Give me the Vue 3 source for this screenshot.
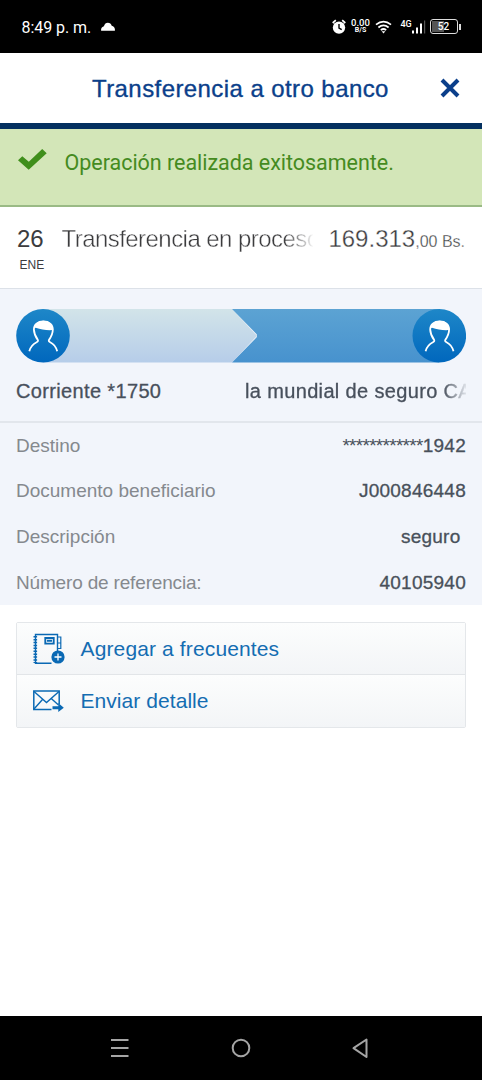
<script setup>
const details = [
  { label: 'Destino', mask: '************', value: '1942' },
  { label: 'Documento beneficiario', value: 'J000846448' },
  { label: 'Descripción', value: 'seguro', padded: true },
  { label: 'Número de referencia:', value: '40105940', tight: true },
]
</script>

<template>
  <div class="screen">
    <div class="status">
      <span class="clock">8:49 p. m.</span>
      <svg class="cloud" width="14" height="9" viewBox="0 0 14 9"><path d="M.1 8.700V7.300C.5 5.400 1.600 4.600 2.900 4.200 3.600 1.800 5 .7 6.800.7c2 0 3.400 1.200 3.900 3.100 1.900.3 3 1.700 3.200 3.500v1.400z" fill="#fff"/></svg>
      <svg class="alarm" width="14" height="16" viewBox="0 0 14 16">
        <circle cx="7" cy="8.6" r="6.2" fill="#fff"/>
        <path d="M.7 4 3.8 1.2M13.3 4 10.2 1.2" stroke="#fff" stroke-width="1.7"/>
        <path d="M7 5v4l2.700 1.600" fill="none" stroke="#000" stroke-width="1.400"/>
      </svg>
      <div class="speed"><span>0.00</span><small>B/S</small></div>
      <svg class="wifi" width="17" height="14" viewBox="0 0 17 14">
        <path d="M1 4.700q7.500-6.200 15 0M3.400 7.500q5.100-4.300 10.200 0M5.800 10.100q2.700-2.200 5.400 0" fill="none" stroke="#fff" stroke-width="1.700"/>
        <path d="m6.600 11.200h3.800L8.500 13.400z" fill="#fff"/>
      </svg>
      <span class="net">4G</span>
      <svg class="bars" width="14" height="15" viewBox="0 0 14 15">
        <path d="M0 11.500h2v3H0zM4 8.500h2v6H4zM8 4.500h2v10H8z" fill="#fff"/>
        <path d="M12 1.500h1.200v13H12z" fill="#555"/>
      </svg>
      <div class="battery"><span>52</span></div>
      <i class="nub"></i>
    </div>

    <header class="header">
      <h1>Transferencia a otro banco</h1>
      <svg class="close" width="20" height="20" viewBox="0 0 20 20"><path d="m2 2 16 16M18 2 2 18" stroke="#0b3f8a" stroke-width="4"/></svg>
    </header>

    <div class="success">
      <svg width="30" height="24" viewBox="0 0 30 24"><path d="m0 11.200 4.300-4 6.500 5.600L24.200.1l4.500 4.100-18 16.500z" fill="#3f8f1b"/></svg>
      <span>Operación realizada exitosamente.</span>
    </div>

    <section class="movement">
      <div class="date"><b>26</b><small>ENE</small></div>
      <div class="concept">Transferencia en proceso</div>
      <div class="amount">169.313<small>,00 Bs.</small></div>
    </section>

    <section class="route">
      <div class="ribbon">
        <svg class="arrow" width="450" height="54" viewBox="0 0 450 54">
          <defs>
            <linearGradient id="pale" x2="0" y2="1"><stop stop-color="#d2e4e9"/><stop offset="1" stop-color="#b6cde9"/></linearGradient>
            <linearGradient id="mid" x2="0" y2="1"><stop stop-color="#5ca3d3"/><stop offset="1" stop-color="#4792ce"/></linearGradient>
            <linearGradient id="deep" x2="0" y2="1"><stop stop-color="#1e87c8"/><stop offset="1" stop-color="#0067bd"/></linearGradient>
          </defs>
          <path d="M27 0H216L241 26.700 216 53.500H27z" fill="url(#pale)"/>
          <path d="M216 0H423V53.500H216L240.500 28.500Q241.500 26.700 240.500 25z" fill="url(#mid)"/>
          <g v-for="x in [0, 396.3]" :key="x" :transform="`translate(${x})`">
            <circle cx="27" cy="26.800" r="26.800" fill="url(#deep)"/>
            <path d="M13.300 42.200c1.100-4.200 3.600-7.200 7.300-9 1.400-.7 1.800-1.100 1.200-2.300-2.300-3.200-3.800-7-3.900-10.300C17.800 15.600 21.800 12.500 27.400 12.500s9.500 3.200 9.400 8.100c0 3.300-1.500 7.100-3.800 10.300-.6 1.200-.2 1.600 1.200 2.300 3.700 1.800 5.900 4.800 7 9" fill="none" stroke="#fff" stroke-width="1.800"/>
            <path d="M17.800 19.500c.8-4.900 4.600-7.700 9.400-7.700 5.900 0 9.800 3.300 10 9.300-6.600.5-12-.5-17.500-2.400z" fill="#fff"/>
          </g>
        </svg>
      </div>
      <div class="parties">
        <span>Corriente *1750</span>
        <span class="to">la mundial de seguro CA</span>
      </div>
    </section>

    <dl class="details">
      <div v-for="d in details" :key="d.label" class="row">
        <dt :class="{ tight: d.tight }">{{ d.label }}</dt>
        <dd :class="{ padded: d.padded }"><span v-if="d.mask" class="mask">{{ d.mask }}</span>{{ d.value }}</dd>
      </div>
    </dl>

    <div class="actions">
      <div class="action">
        <svg width="32" height="32" viewBox="0 0 32 32" fill="none" stroke="#0a69b4">
          <path d="M18.500 30.200H2.500V1.500H24.500V19" stroke-width="1.400"/>
          <path d="M2.300 3v27" stroke-width="3.600" stroke-dasharray="1.500 1.400"/>
          <path d="M25 4h2.800v6H25M27.800 10v5.500H25" stroke-width="1.200"/>
          <path d="M12.300 5h8.400v5.600h-8.400zM14 7.800h5" stroke-width="1.900"/>
          <circle cx="25" cy="24" r="6.600" fill="#0a69b4" stroke="none"/>
          <path d="M25 20.500v7M21.500 24h7" stroke="#fff" stroke-width="1.300"/>
        </svg>
        <span>Agregar a frecuentes</span>
      </div>
      <div class="action">
        <svg width="32" height="32" viewBox="0 0 32 32" fill="none" stroke="#0a69b4">
          <path d="M18.500 24.600H.8V6.100H26.200V19" stroke-width="1.500"/>
          <path d="M1 6.500l12.500 11L26 6.500M1 24l8.500-9.500M25.500 20l-7.300-6.500" stroke-width="1.400"/>
          <path d="M19.500 21.300h5.800v-3.400l5.500 4.900-5.500 4.300v-2.900h-5.800z" fill="#0a69b4" stroke="none"/>
        </svg>
        <span class="tight">Enviar detalle</span>
      </div>
    </div>

    <nav class="nav">
      <svg width="18" height="20" viewBox="0 0 18 20"><path d="M0 2h17.500M0 10h17.500M0 18h17.500" stroke="#a5a5a5" stroke-width="2"/></svg>
      <svg width="20" height="20" viewBox="0 0 20 20"><circle cx="10" cy="10" r="8.300" fill="none" stroke="#a5a5a5" stroke-width="2"/></svg>
      <svg width="17" height="21" viewBox="0 0 17 21"><path d="M14.500 1.500v17.500L1.500 10.200z" fill="none" stroke="#a5a5a5" stroke-width="2" stroke-linejoin="round"/></svg>
    </nav>
  </div>
</template>

<style>
body { background: #fff; }
</style>

<style scoped>
* { box-sizing: border-box; }
.screen {
  width: 482px; height: 1080px; display: flex; flex-direction: column; overflow: hidden;
  background: #fff; font-family: "Liberation Sans", Arial, sans-serif; white-space: nowrap;
}
svg { display: block; flex: none; }
.status { height: 53px; flex: none; background: #000; color: #fff; display: flex; align-items: center; padding: 0 20px 0 21.500px; font-family: Roboto, sans-serif; }
.clock { font-size: 16px; letter-spacing: -.05px; width: 79px; padding-top: 1px; }
.cloud { margin-top: -1px; }
.alarm { margin-left: 217px; }
.speed { display: flex; flex-direction: column; align-items: center; width: 20px; margin: -1px 0 0 5px; font-size: 9.500px; line-height: 9px; font-weight: 500; }
.speed small { font-size: 7px; line-height: 7px; font-weight: 700; }
.wifi { margin-left: 4px; }
.net { font-size: 9px; line-height: 10px; margin: -6px 0 0 9px; width: 12px; font-weight: 500; }
.bars { margin-left: -1px; }
.battery { width: 28px; height: 15px; flex: none; border: 1.500px solid #ddd; border-radius: 3px; margin-left: 4px; padding: 1px; display: flex; }
.battery span { flex: 1; font-size: 10px; line-height: 11px; text-align: center; font-weight: 500; background: linear-gradient(90deg, #555 50%, #000 50%); }
.nub { width: 2px; height: 6px; background: #ddd; margin-left: 1px; flex: none; }

.header { height: 76px; flex: none; display: flex; align-items: center; border-bottom: 6px solid #04305f; padding-left: 92px; }
h1 { margin: 0; width: 348px; font-size: 24px; font-weight: 400; color: #0b3f8a; letter-spacing: .42px; -webkit-text-stroke: .35px #0b3f8a; padding-top: 1px; }

.success { height: 78px; flex: none; background: #d3e6b8; border-bottom: 2px solid #9aba85; display: flex; padding: 20px 0 0 18px; color: #458b1f; }
.success span { font: 400 21.500px/28px Roboto, sans-serif; margin: 0 0 0 16.500px; letter-spacing: -.03px; }

.movement { height: 81px; flex: none; display: flex; padding: 17px 17px 0; color: #3c3c3e; }
.date { width: 44.500px; }
.date b { display: block; font-size: 24px; line-height: 30px; font-weight: 400; }
.date small { display: block; font-size: 12px; line-height: 16px; margin: 3px 0 0 2.500px; }
.concept { width: 251px; font-size: 24px; line-height: 30px; letter-spacing: -.55px; overflow: hidden; -webkit-text-stroke: .4px #fff; mask-image: linear-gradient(90deg, #000 222px, transparent 253px); }
.amount { margin-left: auto; font-size: 24px; line-height: 30px; -webkit-text-stroke: .3px #fff; }
.amount small { font-size: 16px; }

.route { height: 135px; flex: none; background: #f2f5fb; border-top: 1px solid #dce1e8; border-bottom: 2px solid #e2e6ec; padding: 20px 16px 0; }
.parties { display: flex; justify-content: space-between; margin-top: 14px; font-size: 20px; line-height: 28px; color: #48505c; letter-spacing: .35px; -webkit-text-stroke: .3px #48505c; }
.to { width: 221px; overflow: hidden; mask-image: linear-gradient(90deg, #000 198px, transparent 224px); }

.details { margin: 0; height: 182px; flex: none; background: #f2f5fb; padding: 0 16px; }
.row { height: 45.600px; display: flex; justify-content: space-between; align-items: center; font-size: 19px; }
dt { color: #85898e; }
dt.tight { letter-spacing: -.17px; }
dd { margin: 0; color: #48505a; letter-spacing: .25px; -webkit-text-stroke: .3px #48505a; }
.padded { margin-right: 5.500px; }
.mask { letter-spacing: -.7px; -webkit-text-stroke: 0; }

.actions { margin: 17px 16px 0; flex: none; border: 1px solid #e4e7ea; border-radius: 2px; color: #146db2; }
.action { height: 51px; display: flex; align-items: center; padding-left: 16px; background: linear-gradient(#fcfdfd, #f3f5f7); font-size: 21px; }
.action + .action { height: 53px; border-top: 1px solid #e2e5e8; padding-bottom: 1px; }
.action span { margin-left: 15.500px; letter-spacing: .13px; }
.action .tight { letter-spacing: .06px; }

.nav { margin-top: auto; height: 64px; flex: none; background: #000; display: flex; justify-content: space-between; align-items: center; padding: 0 113px 0 111px; }
</style>
